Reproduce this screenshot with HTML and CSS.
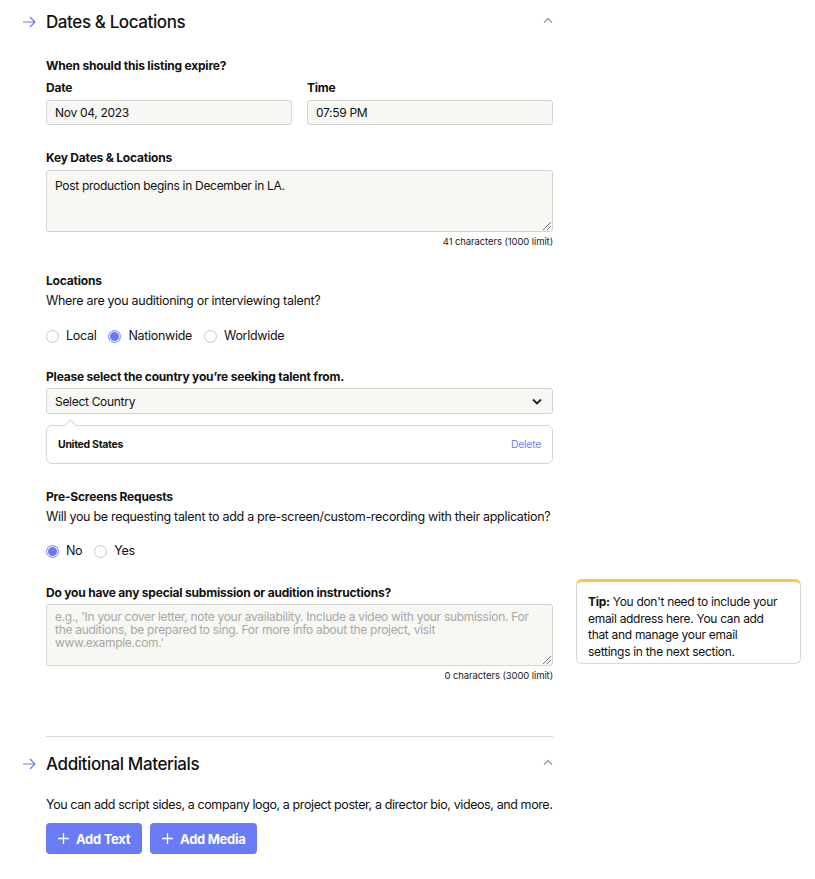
FILE: index.html
```html
<!DOCTYPE html>
<html>
<head>
<meta charset="utf-8">
<link rel="stylesheet" href="styles.css">
</head>
<body>
<div class="page">
  <section class="section">
    <div class="sec-head">
      <svg class="arrow" width="14" height="12" viewBox="0 0 14 12"><path d="M1 6h12M8 1l5 5-5 5" fill="none" stroke="#6b7bf0" stroke-width="1.2"/></svg>
      <h2>Dates &amp; Locations</h2>
      <svg class="chev" width="10" height="6" viewBox="0 0 10 6"><path d="M1 5.5l4-4 4 4" fill="none" stroke="#9a9a9a" stroke-width="1.3"/></svg>
    </div>
    <div class="body">
      <div class="label q1">When should this listing expire?</div>
      <div class="two">
        <div class="col">
          <div class="label">Date</div>
          <div class="input">Nov 04, 2023</div>
        </div>
        <div class="col">
          <div class="label">Time</div>
          <div class="input">07:59 PM</div>
        </div>
      </div>

      <div class="label g25">Key Dates &amp; Locations</div>
      <div class="textarea">Post production begins in December in LA.<span class="grip"></span></div>
      <div class="count">41 characters (1000 limit)</div>

      <div class="label g25">Locations</div>
      <div class="help">Where are you auditioning or interviewing talent?</div>
      <div class="radios r1">
        <span class="radio"><span class="dot"></span>Local</span>
        <span class="radio"><span class="dot on"></span>Nationwide</span>
        <span class="radio"><span class="dot"></span>Worldwide</span>
      </div>

      <div class="label g24">Please select the country you’re seeking talent from.</div>
      <div class="select">Select Country
        <svg width="10" height="7" viewBox="0 0 10 7"><path d="M1 1.5l4 4 4-4" fill="none" stroke="#222" stroke-width="1.8"/></svg>
      </div>
      <div class="card">
        <span class="country">United States</span>
        <span class="delete">Delete</span>
      </div>

      <div class="label g25">Pre-Screens Requests</div>
      <div class="help">Will you be requesting talent to add a pre-screen/custom-recording with their application?</div>
      <div class="radios r2">
        <span class="radio"><span class="dot on"></span>No</span>
        <span class="radio"><span class="dot"></span>Yes</span>
      </div>

      <div class="special">
        <div class="special-field">
          <div class="label">Do you have any special submission or audition instructions?</div>
          <div class="textarea placeholder">e.g., 'In your cover letter, note your availability. Include a video with your submission. For the auditions, be prepared to sing. For more info about the project, visit www.example.com.'<span class="grip"></span></div>
          <div class="count">0 characters (3000 limit)</div>
        </div>
        <div class="tip"><p><b>Tip:</b> You don't need to include your email address here. You can add that and manage your email settings in the next section.</p></div>
      </div>
      <hr class="divider">
    </div>
  </section>

  <section class="section">
    <div class="sec-head">
      <svg class="arrow" width="14" height="12" viewBox="0 0 14 12"><path d="M1 6h12M8 1l5 5-5 5" fill="none" stroke="#6b7bf0" stroke-width="1.2"/></svg>
      <h2>Additional Materials</h2>
      <svg class="chev" width="10" height="6" viewBox="0 0 10 6"><path d="M1 5.5l4-4 4 4" fill="none" stroke="#9a9a9a" stroke-width="1.3"/></svg>
    </div>
    <div class="body">
      <div class="help intro">You can add script sides, a company logo, a project poster, a director bio, videos, and more.</div>
      <div class="buttons">
        <button class="btn"><svg width="11" height="11" viewBox="0 0 11 11"><path d="M5.5 0v11M0 5.5h11" stroke="#fff" stroke-width="1.3"/></svg>Add Text</button>
        <button class="btn"><svg width="11" height="11" viewBox="0 0 11 11"><path d="M5.5 0v11M0 5.5h11" stroke="#fff" stroke-width="1.3"/></svg>Add Media</button>
      </div>
    </div>
  </section>
</div>
</body>
</html>
```

FILE: styles.css
```css
* { box-sizing: border-box; }
body {
  margin: 0;
  background: #fff;
  font-family: Inter, "Noto Sans", sans-serif;
  color: #111;
  letter-spacing: -0.3px;
}
.page { padding: 10px 0 0 22px; }
.sec-head {
  display: flex;
  align-items: center;
  width: 531px;
  height: 24px;
}
.arrow { width: 14px; margin-right: 10px; flex: none; }
.sec-head h2 {
  margin: 0;
  font-size: 17px;
  font-weight: 500;
  letter-spacing: -0.4px;
  flex: 1;
}
.chev { flex: none; margin-top: -4px; }
.body { margin-left: 24px; width: 507px; }
.label {
  font-size: 12px;
  font-weight: 700;
  line-height: 16px;
  letter-spacing: -0.2px;
}
.q1 { margin-top: 24px; margin-bottom: 6px; }
.two { display: flex; gap: 15px; }
.col { flex: 1; }
.col .label { margin-bottom: 4px; }
.input, .select {
  height: 25px;
  background: #f7f7f3;
  border: 1px solid #d4d4d0;
  border-radius: 3px;
  font-size: 12px;
  line-height: 23px;
  padding: 0 8px;
}
.g25 { margin-top: 25px; }
.g24 { margin-top: 24px; }
.textarea {
  position: relative;
  margin-top: 4px;
  height: 62px;
  background: #f7f7f3;
  border: 1px solid #d4d4d0;
  border-radius: 3px;
  font-size: 12px;
  line-height: 13px;
  padding: 8px 8px;
}
.textarea.placeholder { color: #a8a8a3; margin-top: 3px; padding: 5px 8px; }
.grip {
  position: absolute;
  right: 1px;
  bottom: 1px;
  width: 8px;
  height: 8px;
  background: linear-gradient(135deg, transparent 45%, #777 45%, #777 52%, transparent 52%, transparent 70%, #777 70%, #777 77%, transparent 77%);
}
.count {
  text-align: right;
  font-size: 9.5px;
  line-height: 12px;
  margin-top: 4px;
  color: #222;
  letter-spacing: -0.1px;
}
.help {
  font-size: 12.5px;
  line-height: 18px;
  margin-top: 3px;
}
.help.intro { margin-top: 20px; letter-spacing: -0.4px; white-space: nowrap; }
.radios { display: flex; gap: 12px; font-size: 12.5px; line-height: 18px; }
.r1 { margin-top: 17px; }
.r2 { margin-top: 16px; }
.radio { display: flex; align-items: center; gap: 7px; }
.dot {
  width: 13px; height: 13px;
  border-radius: 50%;
  border: 1px solid #c8c8c8;
  background: #fff;
}
.dot.on {
  background: #6979f6;
  border: 1px solid #8e9af8;
  box-shadow: inset 0 0 0 1px #fff;
}
.select {
  margin-top: 3px;
  display: flex;
  justify-content: space-between;
  align-items: center;
  height: 26px;
}
.select svg { margin-right: 2px; }
.card {
  position: relative;
  margin-top: 11px;
  height: 39px;
  border: 1px solid #d4d4d0;
  border-radius: 6px;
  display: flex;
  justify-content: space-between;
  align-items: center;
  padding: 0 11px;
}
.card::before {
  content: "";
  position: absolute;
  top: -5px;
  left: 19px;
  width: 8px;
  height: 8px;
  background: #fff;
  border-top: 1px solid #d4d4d0;
  border-left: 1px solid #d4d4d0;
  transform: rotate(45deg);
}
.country { font-size: 10.5px; font-weight: 700; }
.delete { font-size: 10.5px; color: #7582f0; }
.special { display: flex; align-items: flex-start; gap: 23px; margin-top: 25px; width: 755px; }
.special-field { width: 507px; flex: none; }
.tip {
  flex: none;
  margin-top: -6px;
  width: 225px;
  border: 1px solid #d8d8d8;
  border-top: 3px solid #f2cc45;
  border-radius: 6px;
  padding: 12px 20px 2px 11px;
  font-size: 12px;
  line-height: 16.7px;
  letter-spacing: -0.3px;
}
.tip p { margin: 0; }
.divider {
  margin: 54px 0 0;
  border: 0;
  border-top: 1px solid #d8d8d8;
  height: 0;
}
.section + .section .sec-head { margin-top: 15px; }
.buttons { display: flex; gap: 8px; margin-top: 9px; }
.btn {
  height: 31px;
  border: 0;
  border-radius: 4px;
  background: #6a7bf6;
  color: #fff;
  font-family: inherit;
  font-size: 13px;
  font-weight: 700;
  letter-spacing: -0.3px;
  display: flex;
  align-items: center;
  gap: 7px;
  padding: 0 12px;
}
```
